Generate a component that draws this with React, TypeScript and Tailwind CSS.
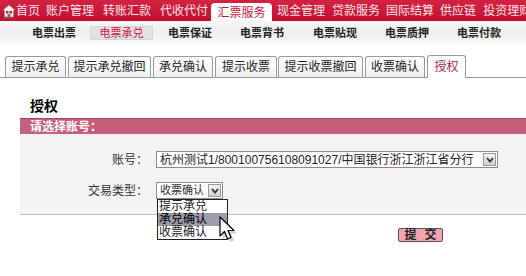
import React from "react";

const FONT = { fontFamily: '"Liberation Sans", "Noto Sans CJK SC", sans-serif' };

function HomeIcon() {
  return (
    <svg width="14" height="15" viewBox="0 0 14 15">
      <path d="M7 1 L13 6 L11.5 6 L11.5 13 L2.5 13 L2.5 6 L1 6 Z" fill="#f4f4f4" stroke="#888" strokeWidth="0.8" />
      <rect x="4" y="7" width="2.5" height="2.5" fill="#c8173a" />
      <rect x="7.5" y="7" width="2.5" height="2.5" fill="#c8173a" />
      <rect x="5.5" y="10" width="3" height="3" fill="#777" />
    </svg>
  );
}

function Cursor() {
  return (
    <svg width="22" height="28" viewBox="0 0 22 28" className="absolute left-[218px] top-[216px]">
      <path d="M3 2 L3 21 L7.5 16.5 L10.5 24 L14 22.5 L11 15.5 L17 15.5 Z" fill="#999" opacity="0.45" transform="translate(2,2)" />
      <path d="M2 1 L2 20 L6.5 15.5 L9.5 23 L13 21.5 L10 14.5 L16 14.5 Z" fill="#fff" stroke="#000" strokeWidth="1.2" strokeLinejoin="round" />
    </svg>
  );
}

function SelectArrow() {
  return (
    <div className="flex h-[13px] w-[13px] items-center justify-center border border-[#9a9a9a] bg-gradient-to-b from-[#f4f4f4] to-[#cfcfcf]">
      <svg width="8" height="6" viewBox="0 0 8 6">
        <path d="M1 1 L4 4.5 L7 1" fill="none" stroke="#333" strokeWidth="1.8" />
      </svg>
    </div>
  );
}

export default function App() {
  const top = [
    { t: "首页", ml: "ml-0" },
    { t: "账户管理", ml: "ml-[6px]" },
    { t: "转账汇款", ml: "ml-[9px]" },
    { t: "代收代付", ml: "ml-[9px]" },
  ];
  const top2 = [
    { t: "现金管理", ml: "ml-[5px]" },
    { t: "贷款服务", ml: "ml-[7px]" },
    { t: "国际结算", ml: "ml-[6px]" },
    { t: "供应链", ml: "ml-[6px]" },
    { t: "投资理财", ml: "ml-[7px]" },
  ];
  const tabs = [
    { t: "提示承兑", w: "w-[61px]" },
    { t: "提示承兑撤回", w: "w-[83px]" },
    { t: "承兑确认", w: "w-[60px]" },
    { t: "提示收票", w: "w-[62px]" },
    { t: "提示收票撤回", w: "w-[85px]" },
    { t: "收票确认", w: "w-[60px]" },
  ];
  return (
    <div className="relative h-[276px] w-[526px] overflow-hidden bg-white text-[12px] text-black" style={FONT}>
      {/* top red menu */}
      <div className="flex h-[21px] items-end overflow-hidden whitespace-nowrap bg-gradient-to-b from-[#d42242] to-[#c0102f] text-[12px] leading-[18px] text-white">
        <div className="mb-[2px] ml-[2px] flex h-[16px] shrink-0 items-center">
          <HomeIcon />
        </div>
        {top.map((i) => (
          <span key={i.t} className={`${i.ml} mb-[1px] shrink-0 text-[#fbe3e8]`}>
            {i.t}
          </span>
        ))}
        <div className="ml-[3px] flex h-[18px] w-[61px] shrink-0 items-center justify-center rounded-t-[4px] bg-white pt-[1px] text-[#c8173a]">
          汇票服务
        </div>
        {top2.map((i) => (
          <span key={i.t} className={`${i.ml} mb-[1px] shrink-0 text-[#fbe3e8]`}>
            {i.t}
          </span>
        ))}
      </div>
      {/* second menu */}
      <div className="flex h-[24px] items-center whitespace-nowrap bg-gradient-to-b from-[#f6f6f6] via-[#eeeeee] to-[#fbfbfb] text-[11px] font-bold text-[#222]">
        <span className="ml-[32px]">电票出票</span>
        <span className="ml-[14px] flex h-[14px] w-[63px] items-center justify-center border border-[#d6d6d6] bg-[#e2e2e2] pt-[1px] font-normal text-[#c8173a]">
          电票承兑
        </span>
        <span className="ml-[15px]">电票保证</span>
        <span className="ml-[28px]">电票背书</span>
        <span className="ml-[29px]">电票贴现</span>
        <span className="ml-[28px]">电票质押</span>
        <span className="ml-[28px]">电票付款</span>
      </div>
      {/* sub tabs */}
      <div className="mt-[10px] flex h-[23px] items-end border-b border-[#9a9a9a] pl-[5px] whitespace-nowrap">
        {tabs.map((tb, idx) => (
          <div
            key={tb.t}
            className={`${tb.w} ${idx === 0 ? "" : idx === 4 ? "ml-[1px]" : "ml-[2px]"} flex h-[21px] items-center justify-center rounded-t-[3px] border border-b-0 border-[#9a9a9a] bg-gradient-to-b from-white to-[#f0f0f0] text-[12px] text-[#222]`}
          >
            {tb.t}
          </div>
        ))}
        <div className="relative -mb-px ml-[2px] flex h-[23px] w-[39px] items-center justify-center rounded-t-[3px] border border-b-0 border-[#9a9a9a] bg-white text-[12px] text-[#b0284a]">
          授权
        </div>
      </div>
      {/* heading */}
      <div className="ml-[30px] mt-[20px] h-[17px] text-[14px] font-bold leading-[17px]">授权</div>
      {/* section */}
      <div className="ml-[20px] mt-[3px]">
        <div className="flex h-[16px] items-center border-t border-[#a8405a] bg-[#c5607a] pl-[10px] text-[12px] font-bold text-white">
          请选择账号：
        </div>
        <div className="h-[81px] border-b border-[#bdbdbd] bg-[#f3f3f6] pt-[17px]">
          <div className="flex h-[17px] items-center">
            <span className="w-[128px] text-right text-[12px] text-[#333]">账号：</span>
            <div className="ml-[8px] flex h-[17px] w-[342px] items-center justify-between border border-[#8a8a8a] bg-white pl-[3px] pr-[1px]">
              <span className="text-[12px] text-[#222]">杭州测试1/800100756108091027/中国银行浙江浙江省分行</span>
              <SelectArrow />
            </div>
          </div>
          <div className="mt-[14px] flex h-[17px] items-center">
            <span className="w-[128px] text-right text-[12px] text-[#333]">交易类型：</span>
            <div className="ml-[8px] flex h-[17px] w-[67px] items-center justify-between border border-[#8a8a8a] bg-white pl-[3px] pr-[1px]">
              <span className="text-[11px] text-[#333]">收票确认</span>
              <SelectArrow />
            </div>
          </div>
        </div>
      </div>
      {/* dropdown list */}
      <div className="absolute left-[157px] top-[199px] w-[71px] border border-[#222] bg-white text-[12px] leading-[13px] text-[#222]">
        <div className="h-[13px] pl-[1px]">提示承兑</div>
        <div className="h-[13px] bg-[#9c9cab] pl-[1px] text-black">承兑确认</div>
        <div className="h-[13px] pl-[1px]">收票确认</div>
      </div>
      <Cursor />
      {/* submit */}
      <div className="absolute left-[398px] top-[228px] flex h-[14px] w-[45px] items-center justify-center gap-[8px] rounded-[2px] border border-[#555] bg-[#f4a3b3] text-[12px] font-bold leading-[12px] text-[#222]">
        <span>提</span>
        <span>交</span>
      </div>
    </div>
  );
}
